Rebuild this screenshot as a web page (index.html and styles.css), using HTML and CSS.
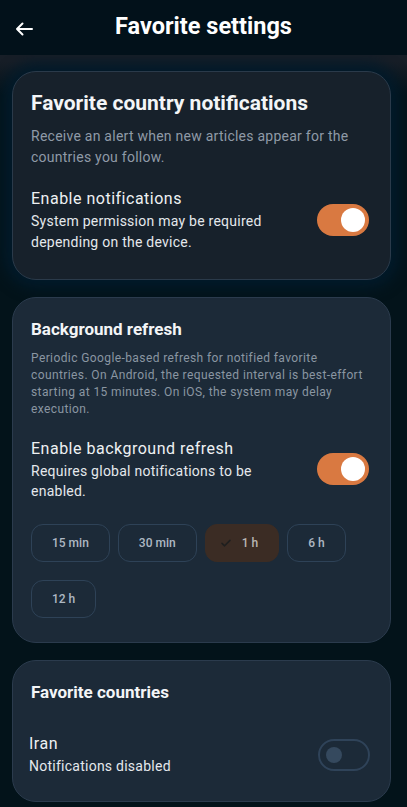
FILE: index.html
```html
<!DOCTYPE html>
<html lang="en">
<head>
  <meta charset="UTF-8">
  <meta name="viewport" content="width=device-width, initial-scale=1.0">
  <title>Favorite settings</title>
  <link rel="stylesheet" href="styles.css">
</head>
<body>
  <div id="app">
    <header class="topbar">
      <span class="back">
        <svg width="18" height="14" viewBox="0 0 18 14" fill="none" stroke="#fff" stroke-width="2" stroke-linecap="round" stroke-linejoin="round">
          <path d="M17 7H2M7.5 1.5L2 7l5.5 5.5"/>
        </svg>
      </span>
      <h1 class="title">Favorite settings</h1>
    </header>

    <div class="content">
      <section class="card card-dark">
        <h2 class="card-title big">Favorite country notifications</h2>
        <p class="desc">Receive an alert when new articles appear for the countries you follow.</p>
        <div class="row">
          <div class="row-text">
            <div class="label">Enable notifications</div>
            <div class="sub">System permission may be required depending on the device.</div>
          </div>
          <span class="switch on"></span>
        </div>
      </section>

      <section class="card">
        <h2 class="card-title">Background refresh</h2>
        <p class="desc small">Periodic Google-based refresh for notified favorite countries. On Android, the requested interval is best-effort starting at 15 minutes. On iOS, the system may delay execution.</p>
        <div class="row">
          <div class="row-text">
            <div class="label">Enable background refresh</div>
            <div class="sub tight">Requires global notifications to be enabled.</div>
          </div>
          <span class="switch on"></span>
        </div>
        <ul class="chips">
          <li class="chip">15 min</li>
          <li class="chip">30 min</li>
          <li class="chip selected">
            <svg width="16" height="16" viewBox="0 0 16 16" fill="none" stroke="#1f1f1f" stroke-width="1.6" stroke-linecap="round" stroke-linejoin="round">
              <path d="M4 8.3l2.6 2.5L12 5.4"/>
            </svg>
            1 h
          </li>
          <li class="chip">6 h</li>
          <li class="chip">12 h</li>
        </ul>
      </section>

      <section class="card">
        <h2 class="card-title">Favorite countries</h2>
        <div class="row tile">
          <div class="row-text">
            <div class="label">Iran</div>
            <div class="sub">Notifications disabled</div>
          </div>
          <span class="switch off"></span>
        </div>
      </section>
    </div>
  </div>
</body>
</html>
```

FILE: styles.css
```css
*{
  margin: 0;
  padding: 0;
  box-sizing: border-box;
}
body{
  background: #03131a;
  font-family: Roboto, "Noto Sans", sans-serif;
  color: #eef1f4;
}
#app{
  width: 407px;
  height: 807px;
  overflow: hidden;
}

.topbar{
  height: 55px;
  background: #02111a;
  display: flex;
  align-items: center;
  justify-content: center;
  position: relative;
}
.back{
  position: absolute;
  left: 15px;
  top: 22px;
  display: flex;
}
.title{
  font-size: 23.5px;
  font-weight: 700;
  color: #fff;
  margin-top: -3px;
}

.content{
  padding: 16px 16px 0 12px;
  display: flex;
  flex-direction: column;
  gap: 17px;
  background: linear-gradient(#171e27 0, #171e27 7px, #03131a 40px);
}

.card{
  background: #1c2a38;
  border: 1px solid #2b3b4d;
  border-radius: 24px;
  padding: 19px 21px 24px 18px;
}
.card-dark{
  background: #17212b;
  border-color: #2a3a4a;
  padding: 17px 21px 26px 18px;
  box-shadow: 0 0 14px 8px #021a2a;
}

.card-title{
  font-size: 17px;
  line-height: 24px;
  font-weight: 700;
  color: #f3f5f7;
}
.card-title.big{
  font-size: 21px;
  line-height: 28px;
}

.desc{
  margin-top: 9px;
  font-size: 14px;
  line-height: 21px;
  letter-spacing: 0.25px;
  color: #8f9aa7;
}
.desc.small{
  margin-top: 9px;
  font-size: 12px;
  line-height: 17px;
  letter-spacing: 0.4px;
  color: #8a96a2;
}

.row{
  margin-top: 19px;
  display: flex;
  align-items: center;
  justify-content: space-between;
}
.row-text{
  width: 250px;
}
.label{
  font-size: 16px;
  line-height: 24px;
  letter-spacing: 0.5px;
  color: #eef1f3;
}
.sub{
  font-size: 14px;
  line-height: 21px;
  letter-spacing: 0.25px;
  color: #e4e8ec;
}
.sub.tight{
  line-height: 20px;
}

.tile{
  margin: 28px -1px 0 -2px;
}

.switch{
  width: 52px;
  height: 32px;
  border-radius: 16px;
  display: flex;
  align-items: center;
  flex-shrink: 0;
}
.switch::after{
  content: '';
  border-radius: 50%;
}
.switch.on{
  background: #d97941;
  justify-content: flex-end;
  padding-right: 4px;
}
.switch.on::after{
  width: 24px;
  height: 24px;
  background: #fff;
}
.switch.off{
  border: 2px solid #2f4359;
  padding-left: 6px;
}
.switch.off::after{
  width: 16px;
  height: 16px;
  background: #35495e;
}

.chips{
  list-style: none;
  margin-top: 23px;
  display: flex;
  flex-wrap: wrap;
  gap: 18px 8px;
}
.chip{
  height: 38px;
  padding: 0 20px;
  border: 1px solid #2e4257;
  border-radius: 12px;
  display: flex;
  align-items: center;
  font-size: 12px;
  font-weight: 500;
  color: #aeb8c3;
}
.chip.selected{
  background: #3b2c24;
  border-color: #3b2c24;
  padding: 0 20px 0 12px;
  gap: 8px;
  color: #b9b6b3;
}
```
